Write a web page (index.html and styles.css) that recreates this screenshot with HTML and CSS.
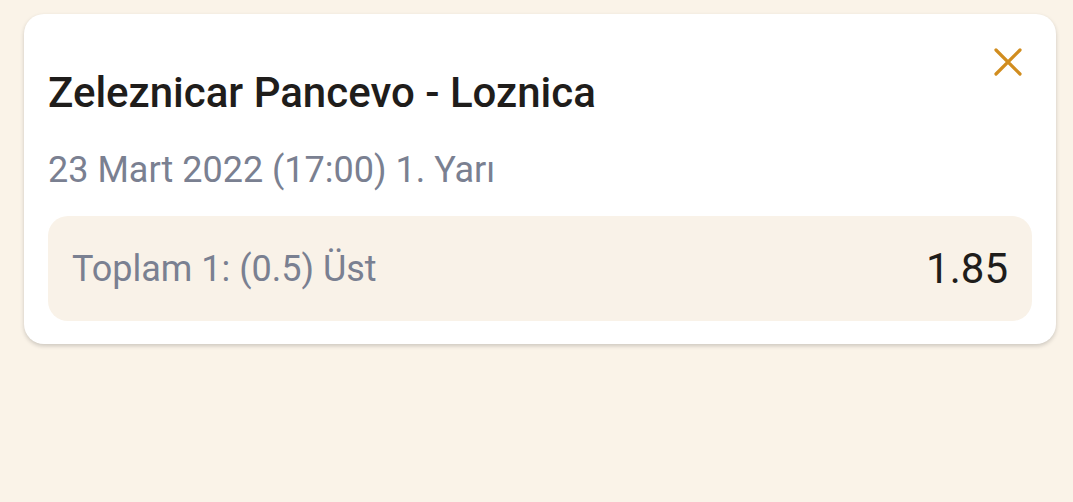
FILE: index.html
```html
<html>
  <head>
    <meta charset="UTF-8" />
    <title>Kupon</title>
    <link rel="stylesheet" href="styles.css">
  </head>
  <body>
    <div class="bet_card">
      <button class="bet_close" aria-label="Kapat">
        <svg width="32" height="32" viewBox="0 0 32 32">
          <path d="M4 4 L28 28 M28 4 L4 28" stroke="#d18d1f" stroke-width="3.2" stroke-linecap="round" fill="none" />
        </svg>
      </button>
      <h2 class="bet_title">Zeleznicar Pancevo - Loznica</h2>
      <p class="bet_date">23 Mart 2022 (17:00) 1. Yarı</p>
      <div class="bet_row">
        <span class="bet_market">Toplam 1: (0.5) Üst</span>
        <span class="bet_odds">1.85</span>
      </div>
    </div>
  </body>
</html>
```

FILE: styles.css
```css
* {
  margin: 0;
  padding: 0;
  box-sizing: border-box;
}
body {
  font-family: Roboto, "Noto Sans", sans-serif;
  background: #faf3e8;
  padding: 14px 17px 0 24px;
}
.bet_card {
  position: relative;
  background: #fff;
  border-radius: 20px;
  box-shadow: 0 2px 4px rgba(0, 0, 0, 0.18);
  padding: 54px 24px 23px 24px;
}
.bet_close {
  position: absolute;
  top: 32px;
  right: 32px;
  width: 32px;
  height: 32px;
  border: 0;
  background: none;
}
.bet_close svg {
  display: block;
}
.bet_title {
  font-size: 42px;
  font-weight: 500;
  color: #1f1d1b;
  line-height: 50px;
}
.bet_date {
  margin-top: 30px;
  font-size: 36px;
  line-height: 44px;
  color: #7a8091;
}
.bet_row {
  margin-top: 24px;
  background: #f9f2e8;
  border-radius: 20px;
  height: 105px;
  padding: 0 24px;
  display: flex;
  align-items: center;
  justify-content: space-between;
}
.bet_market {
  font-size: 36px;
  color: #7a8091;
}
.bet_odds {
  font-size: 42px;
  color: #1f1d1b;
}
```
